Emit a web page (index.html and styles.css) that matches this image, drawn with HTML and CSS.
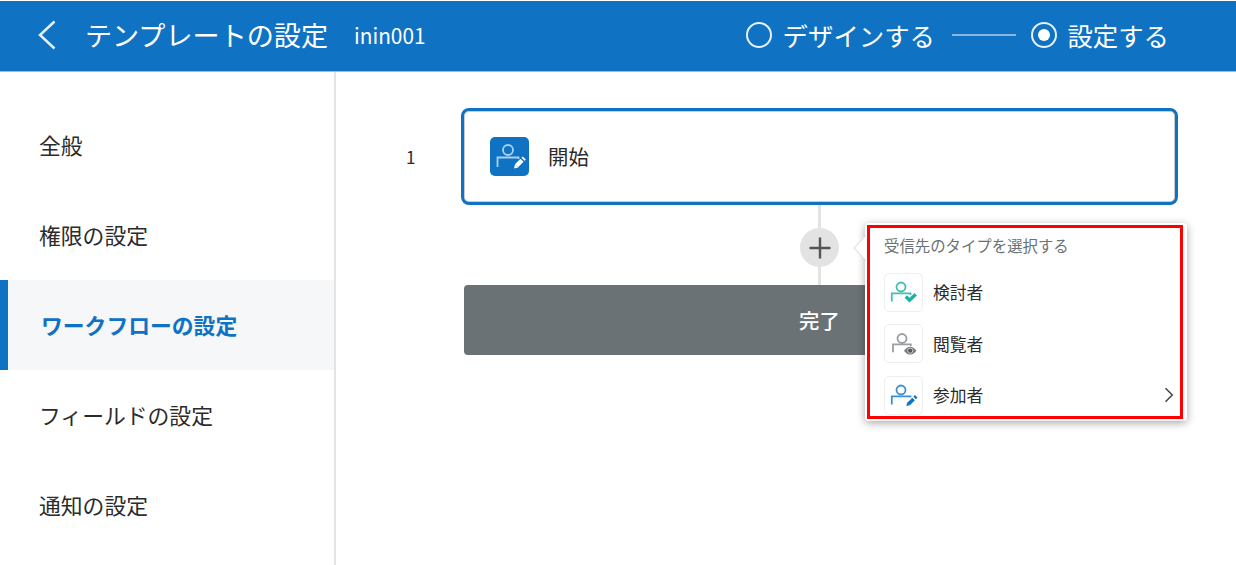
FILE: index.html
```
<!DOCTYPE html>
<html lang="ja">
<head>
<meta charset="utf-8">
<title>テンプレートの設定</title>
<link rel="stylesheet" href="styles.css">
</head>
<body>
<header class="header">
  <svg class="back" width="18" height="30" viewBox="0 0 18 30"><path d="M16.500 1.500 2 15 16.500 28.500" fill="none" stroke="#e3effa" stroke-width="2.500"/></svg>
  <h1 class="title">テンプレートの設定</h1>
  <span class="name">inin001</span>
  <div class="steps">
    <span class="radio"></span><span class="step">デザインする</span>
    <span class="dash"></span>
    <span class="radio on"></span><span class="step">設定する</span>
  </div>
</header>
<div class="body">
  <nav class="side">
    <a class="item">全般</a>
    <a class="item">権限の設定</a>
    <a class="item active">ワークフローの設定</a>
    <a class="item">フィールドの設定</a>
    <a class="item">通知の設定</a>
  </nav>
  <main class="main">
    <div class="row">
      <span class="num">1</span>
      <div class="card">
        <span class="badge">
          <svg width="39" height="39" viewBox="0 0 39 39" fill="none"><g stroke="#a9d0f0" stroke-width="1.800"><circle cx="18" cy="13" r="5"/><path d="M7.500 30V20.500H28.500V22"/></g><path d="M26.500 28.800 32 23.300M33 22.300 34.300 21" stroke="#fff" stroke-width="4.400"/><path d="M24 31.500 25 27.200 28.300 30.500Z" fill="#fff"/></svg>
        </span>
        <span class="start">開始</span>
      </div>
    </div>
    <div class="link">
      <span class="plus"><svg width="22" height="22" viewBox="0 0 22 22"><path d="M11 .5V21.500M.5 11H21.500" stroke="#555" stroke-width="2.400"/></svg></span>
      <section class="popup">
        <svg class="arrow" width="13" height="26" viewBox="0 0 13 26"><path d="M13 .5 1 13 13 25.500" fill="#fff" stroke="#e3e3e3" stroke-width="1.200"/></svg>
        <div class="frame">
          <h2 class="caption">受信先のタイプを選択する</h2>
          <div class="option">
            <span class="box"><svg width="38" height="38" viewBox="0 0 38 38" fill="none" stroke="#3fc0b4" stroke-width="1.800"><circle cx="17" cy="14" r="4.500"/><path d="M7.800 28.500V20.300H26.500V22"/><path d="M21.800 23.500 25.500 27.200 31.800 21.300" stroke="#17b3a5" stroke-width="3.400"/></svg></span>検討者
          </div>
          <div class="option">
            <span class="box"><svg width="38" height="38" viewBox="0 0 38 38" fill="none" stroke="#999fa1" stroke-width="1.800"><circle cx="18" cy="14.500" r="4.500"/><path d="M9 28.300V20.300H26.800V22"/><path d="M20 26.700Q26 18.700 32.500 26.700Q26 34.500 20 26.700Z" fill="#757b7e" stroke="none"/><circle cx="26.200" cy="26.700" r="2.600" fill="#555c5f" stroke="#cfd2d3" stroke-width="1"/></svg></span>閲覧者
          </div>
          <div class="option">
            <span class="box"><svg width="38" height="38" viewBox="0 0 38 38" fill="none" stroke="#3b8fd3" stroke-width="1.800"><circle cx="17" cy="14" r="4.500"/><path d="M7.800 28.500V20.300H26.500V21.500"/><path d="M24.800 27.700 29.600 22.900M30.600 21.900 32.200 20.300" stroke="#0f72c3" stroke-width="3.600"/><path d="M22.300 30 23.300 26 26.500 29Z" fill="#0f72c3" stroke="none"/></svg></span>参加者
            <svg class="more" width="10" height="16" viewBox="0 0 10 16"><path d="M1.500 1.200 8.300 8 1.500 14.800" fill="none" stroke="#444" stroke-width="1.500"/></svg>
          </div>
        </div>
      </section>
    </div>
    <div class="done">完了</div>
  </main>
</div>
</body>
</html>
```
FILE: styles.css
```
* { box-sizing: border-box; }
body {
  margin: 0;
  height: 565px;
  padding-top: 1px;
  overflow: hidden;
  display: flex;
  flex-direction: column;
  background: #fff;
  color: #2b2b2b;
  font-family: "Noto Sans CJK JP", sans-serif;
}
.header {
  height: 71px;
  flex: none;
  display: flex;
  align-items: center;
  padding: 0 67px 2px 38px;
  background: #0f72c3;
  border-bottom: 1px solid #8dbde4;
  color: #fff;
}
.title { margin: 0 0 0 29px; font-size: 27.100px; font-weight: 400; line-height: 40px; }
.name { margin-left: 26px; font-size: 20.800px; line-height: 40px; }
.steps { margin-left: auto; display: flex; align-items: center; }
.radio {
  width: 26px;
  height: 26px;
  display: grid;
  place-items: center;
  border: 2px solid #e6f1fb;
  border-radius: 50%;
}
.radio.on::after { content: ""; width: 12px; height: 12px; border-radius: 50%; background: #fff; }
.step { margin-left: 10.500px; font-size: 25.400px; line-height: 40px; }
.dash { width: 64px; height: 2px; margin: 0 15px 0 17px; background: #89b9e2; }
.body { flex: 1; display: flex; min-height: 0; }
.side { width: 336px; flex: none; padding-top: 28px; border-right: 2px solid #e4e4e4; }
.item {
  height: 90px;
  display: flex;
  align-items: center;
  padding-left: 39px;
  padding-bottom: 1px;
  font-size: 21.800px;
}
.active {
  padding-left: 33px;
  border-left: 8px solid #0f72c3;
  background: #f5f7f9;
  color: #0f72c3;
  font-weight: 700;
}
.main { flex: 1; padding: 36px 58px 0 70px; }
.row { display: flex; align-items: center; }
.num { width: 55px; font-size: 17px; }
.card {
  flex: 1;
  height: 97px;
  display: flex;
  align-items: center;
  padding-left: 26px;
  border: 3px solid #0f72c3;
  border-radius: 8px;
  box-shadow: inset 0 0 0 1px #c9ccce;
}
.badge { width: 39px; height: 39px; border-radius: 5px; background: #0f72c3; }
.start { margin-left: 19px; padding-bottom: 2px; font-size: 20.400px; }
.link {
  position: relative;
  height: 80px;
  margin: 0 3px 0 58px;
  display: grid;
  place-items: center;
  background: linear-gradient(#e3e3e3, #e3e3e3) center / 3px 100% no-repeat;
}
.plus {
  width: 39px;
  height: 39px;
  display: grid;
  place-items: center;
  margin-top: 5px;
  border-radius: 50%;
  background: #e3e3e3;
}
.done {
  height: 70px;
  margin: 0 3px 0 58px;
  display: grid;
  place-items: center;
  padding-bottom: 1px;
  border-radius: 4px;
  background: #6b7275;
  color: #fff;
  font-size: 20.400px;
  font-weight: 500;
}
/* Recipient type menu, opened over the workflow */
.popup {
  position: absolute;
  z-index: 1;
  left: 401px;
  top: 18px;
  width: 322px;
  height: 198px;
  padding: 2px 4px 2px 2px;
  border-radius: 4px;
  background: #fff;
  box-shadow: 0 2px 8px rgba(0, 0, 0, .35);
}
.arrow { position: absolute; left: -12px; top: 12px; }
.frame { height: 194px; padding: 4px 6px 0 14px; border: 3px solid #f00; }
.caption { margin: 0 0 15px; font-size: 15.400px; font-weight: 400; line-height: 26px; color: #6b7275; }
.option { display: flex; align-items: center; height: 38px; margin-bottom: 13.500px; font-size: 16.800px; }
.box { width: 39px; height: 39px; flex: none; margin-right: 10px; border: 1px solid #eee; border-radius: 5px; }
.box svg { display: block; margin: -1px; }
.more { margin-left: auto; }
```
